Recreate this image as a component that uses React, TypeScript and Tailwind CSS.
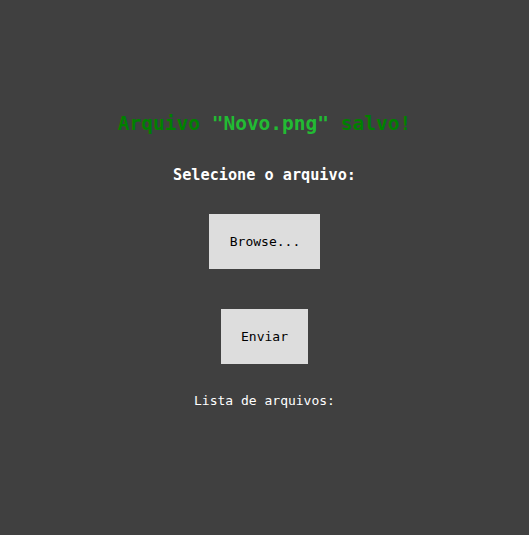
export default function App() {
  return (
    <div
      className="min-h-[535px] w-full bg-[#404040] flex flex-col items-center pt-[112px]"
      style={{ fontFamily: '"DejaVu Sans Mono", monospace' }}
    >
      <h1 className="text-[19.5px] leading-[24px] font-bold text-[#008000]">
        Arquivo <span className="text-[#22bb33]">"Novo.png"</span> salvo!
      </h1>
      <p className="mt-[30px] text-[15.2px] leading-[18px] font-bold text-white">Selecione o arquivo:</p>
      <div className="mt-[30px] bg-[#dddddd] text-black text-[13px] leading-[15px] pl-[21px] pr-[20px] py-[20px]">
        Browse...
      </div>
      <button className="mt-[40px] bg-[#dddddd] text-black text-[13px] leading-[15px] px-[20px] py-[20px]">
        Enviar
      </button>
      <p className="mt-[29px] text-[13px] leading-[16px] text-white">Lista de arquivos:</p>
    </div>
  );
}
